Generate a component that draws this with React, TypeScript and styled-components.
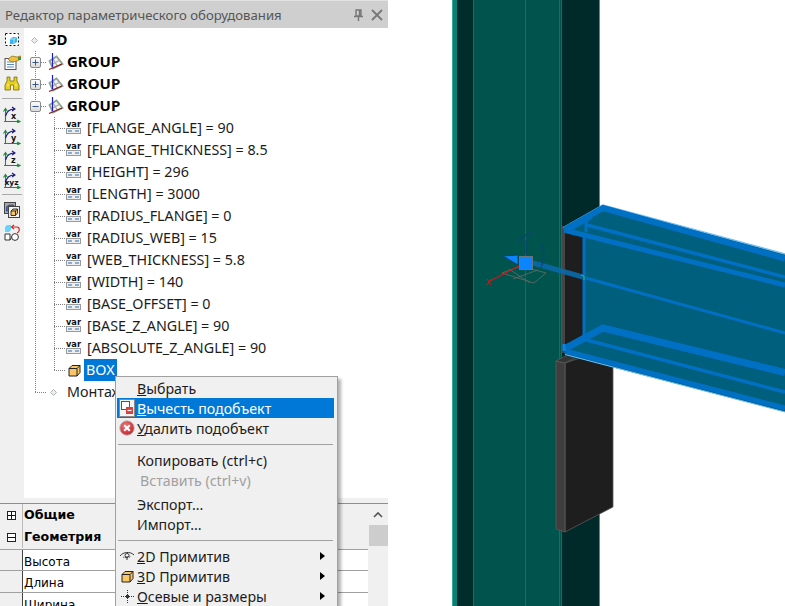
import styled, { createGlobalStyle } from "styled-components";

const UI_FONT = `"Noto Sans", "Open Sans", sans-serif`;

const GlobalStyle = createGlobalStyle`
    html, body {
        margin: 0;
        padding: 0;
        background: #fff;
        overflow: hidden;
    }
    * {
        box-sizing: border-box;
    }
`;

const Page = styled.div`
    position: relative;
    display: flex;
    width: 785px;
    height: 606px;
    overflow: hidden;
    font-family: ${UI_FONT};
    background: #fff;
`;

const Panel = styled.div`
    display: flex;
    flex-direction: column;
    width: 388px;
    height: 606px;
    flex-shrink: 0;
    background: #f0f0f0;
`;

const TitleBar = styled.div`
    display: flex;
    align-items: center;
    height: 28px;
    padding: 0 5px 0 5px;
    background: #cfcfcf;
    border-top: 1px solid #e2e2e2;
    color: #555;
    font-size: 13.15px;
`;

const TitleText = styled.span`
    flex: 1;
    white-space: nowrap;
`;

const TitleIcons = styled.div`
    display: flex;
    align-items: center;
    gap: 7px;
`;

const Body = styled.div`
    display: flex;
    height: 470px;
`;

const ToolColumn = styled.div`
    display: flex;
    flex-direction: column;
    align-items: center;
    width: 24px;
    padding-top: 1px;
    background: #f0f0f0;
`;

const Tool = styled.div`
    display: flex;
    align-items: center;
    justify-content: center;
    width: 24px;
    height: 22px;
`;

const ToolSeparator = styled.div`
    width: 20px;
    height: 1px;
    margin: 3px 0 4px;
    background: #aaa;
`;

const Tree = styled.div`
    flex: 1;
    padding-top: 1px;
    background: #fff;
`;

const Row = styled.div`
    display: flex;
    align-items: center;
    height: 22px;
    font-size: 14.3px;
    color: #1c1c1c;
    white-space: nowrap;
`;

/* one indent column of the tree, draws its dotted guides as backgrounds */
const Branch = styled.div<{ $w: number; $x?: number; $v?: "full" | "top"; $h?: number }>`
    flex-shrink: 0;
    display: flex;
    align-items: center;
    justify-content: center;
    width: ${(p) => p.$w}px;
    height: 22px;
    background-image: ${(p) =>
            p.$v ? "repeating-linear-gradient(#808080 0 1px, transparent 1px 2px)" : "none"},
        repeating-linear-gradient(90deg, #808080 0 1px, transparent 1px 2px);
    background-size: 1px ${(p) => (p.$v === "top" ? "12px" : "22px")},
        ${(p) => p.$h ?? 0}px 1px;
    background-position: ${(p) => p.$x ?? 0}px 0, ${(p) => p.$x ?? 0}px 11px;
    background-repeat: no-repeat;
`;

const Label = styled.span<{ $bold?: boolean; $selected?: boolean; $gap?: number }>`
    margin-left: ${(p) => p.$gap ?? 0}px;
    padding: ${(p) => (p.$selected ? "0 2px" : "0")};
    line-height: ${(p) => (p.$bold ? "20px" : "22px")};
    margin-bottom: ${(p) => (p.$bold ? "2px" : "0")};
    font-size: ${(p) => (p.$bold ? "15px" : "inherit")};
    font-weight: ${(p) => (p.$bold ? 700 : 400)};
    background: ${(p) => (p.$selected ? "#0078d7" : "transparent")};
    color: ${(p) => (p.$selected ? "#fff" : p.$bold ? "#000" : "#1c1c1c")};
`;

const VarSlot = styled.div`
    display: flex;
    margin-left: 1px;
`;

const Props = styled.div`
    display: flex;
    flex: 1;
    margin-top: 5px;
    background: #f0f0f0;
    border-top: 1px solid #8e8e8e;
    overflow: hidden;
`;

const PropTable = styled.div`
    width: 368px;
    font-family: "DejaVu Sans", sans-serif;
    font-size: 12px;
    color: #000;
`;

const Categories = styled.div`
    padding-bottom: 1px;
`;

const Category = styled.div`
    display: flex;
    align-items: center;
    height: 22px;
    font-size: 12.6px;
    font-weight: 700;
`;

const PropRow = styled.div`
    display: flex;
    height: 22px;
    background: #fff;
    border-top: 1px solid #a0a0a0;
    &:nth-child(2) {
        height: 21px;
    }
`;

const Gutter = styled.div`
    display: flex;
    align-items: center;
    justify-content: center;
    width: 22px;
    height: 100%;
    flex-shrink: 0;
    background: #f0f0f0;
`;

const PropName = styled.div<{ $dark?: boolean }>`
    flex: 1;
    padding-left: 1px;
    line-height: ${(p) => (p.$dark ? "24px" : "22px")};
    border-left: 1px solid ${(p) => (p.$dark ? "#444" : "#bbb")};
`;

const PropBox = styled.div`
    display: flex;
    align-items: center;
    justify-content: center;
    width: 9px;
    height: 9px;
    border: 1px solid #222;
    background: #fff;
`;

const ScrollBar = styled.div`
    display: flex;
    flex-direction: column;
    align-items: center;
    width: 20px;
`;

const ScrollArrow = styled.div`
    display: flex;
    align-items: center;
    justify-content: center;
    width: 20px;
    height: 21px;
`;

const ScrollThumb = styled.div`
    width: 19px;
    height: 21px;
    background: #cdcdcd;
`;

const Viewport = styled.svg`
    display: block;
    flex: 1;
    height: 606px;
`;

const Menu = styled.div`
    position: absolute;
    left: 115px;
    top: 376px;
    width: 223px;
    padding: 1px 3px 4px 1px;
    background: #f0f0f0;
    border: 1px solid #a0a0a0;
    box-shadow: 3px 3px 3px rgba(0, 0, 0, 0.3);
    font-size: 14.2px;
    color: #1c1c1c;
`;

const MenuItem = styled.div<{ $active?: boolean; $disabled?: boolean; $gapTop?: boolean; $indent?: number }>`
    display: flex;
    align-items: center;
    height: 20px;
    margin-top: ${(p) => (p.$gapTop ? "4px" : "0")};
    padding-left: ${(p) => p.$indent ?? 0}px;
    white-space: nowrap;
    background: ${(p) => (p.$active ? "#0078d7" : "transparent")};
    color: ${(p) => (p.$disabled ? "#a0a0a0" : p.$active ? "#fff" : "#1c1c1c")};
`;

const MenuIcon = styled.div`
    display: flex;
    align-items: center;
    justify-content: center;
    width: 20px;
    flex-shrink: 0;
`;

const MenuText = styled.span`
    flex: 1;
`;

const SubArrow = styled.div`
    width: 0;
    height: 0;
    margin-right: 9px;
    border-left: 5px solid #000;
    border-top: 4px solid transparent;
    border-bottom: 4px solid transparent;
`;

const MenuSeparator = styled.div`
    height: 1px;
    margin: 6px 0 5px 1px;
    width: 215px;
    background: #a0a0a0;
`;

/* ---------- icons ---------- */

const PinIcon = () => (
    <svg width="11" height="12" viewBox="0 0 11 12">
        <path d="M3 1h5v6H3zM1 7.5h9M5.5 8v4M6.5 1v6" fill="none" stroke="#777" strokeWidth="1.4" />
    </svg>
);

const CloseIcon = () => (
    <svg width="12" height="12" viewBox="0 0 12 12">
        <path d="M1 1l10 10M11 1L1 11" stroke="#777" strokeWidth="1.8" />
    </svg>
);

const Expander = ({ open }: { open?: boolean }) => (
    <svg width="11" height="11" viewBox="0 0 11 11">
        <defs>
            <linearGradient id="exp" x1="0" y1="0" x2="0" y2="1">
                <stop offset="0" stopColor="#fff" />
                <stop offset="1" stopColor="#d8d8d8" />
            </linearGradient>
        </defs>
        <rect x="0.5" y="0.5" width="10" height="10" rx="1.5" fill="url(#exp)" stroke="#8a8a8a" />
        <path d={open ? "M2.5 5.5h6" : "M2.5 5.5h6M5.5 2.5v6"} stroke="#35598a" strokeWidth="1" />
    </svg>
);

const Diamond = () => (
    <svg width="7" height="7" viewBox="0 0 7 7">
        <path d="M3.5 0.5L6.5 3.5L3.5 6.5L0.5 3.5Z" fill="#eee" stroke="#aeb4b8" />
    </svg>
);

const GroupIcon = () => (
    <svg width="18" height="18" viewBox="0 0 18 18">
        <path d="M2.5 8L9.5 3.5L15.5 11L6 15.5Z" fill="#f4f4f4" stroke="#8ea48e" strokeWidth="1.8" />
        <path d="M6 5.7L10.5 13.5M4.2 11.7L12.5 7.2" stroke="#a6a6a6" strokeWidth="1.2" />
        <path d="M2 16.5L15 11" stroke="#8a1c1c" strokeWidth="1.3" />
        <path d="M5.5 0v14" stroke="#1a1ad0" strokeWidth="1.2" />
    </svg>
);

const VarIcon = () => (
    <svg width="16" height="16" viewBox="0 0 16 16">
        <text
            x="0"
            y="7"
            fontFamily="DejaVu Sans, sans-serif"
            fontSize="8"
            fontWeight="700"
            fill="#111"
            textLength="15"
            lengthAdjust="spacingAndGlyphs"
        >
            var
        </text>
        <rect x="0.5" y="8.5" width="14" height="5" fill="#eee" stroke="#9a9a9a" />
        <path d="M2 11h4M9 11h4" stroke="#1f6fc0" strokeWidth="1" />
    </svg>
);

const CubeIcon = () => (
    <svg width="13" height="13" viewBox="0 0 13 13">
        <path d="M1 4.5L4 1.5H12V8.5L9 12H1Z" fill="#fbc766" stroke="#222" strokeWidth="1" />
        <path d="M1 4.5H9V12M9 4.5L12 1.5" fill="none" stroke="#222" strokeWidth="1" />
    </svg>
);

const SubtractIcon = () => (
    <svg width="16" height="18" viewBox="0 0 16 18">
        <rect x="0.5" y="0.5" width="15" height="17" fill="#f4f4f4" stroke="#888" />
        <rect x="2.5" y="2.5" width="8" height="8" fill="#fff" stroke="#b03030" />
        <rect x="7" y="8" width="7" height="7" fill="#d84040" />
        <path d="M8.5 11.5h4" stroke="#fff" strokeWidth="1.2" />
    </svg>
);

const DeleteIcon = () => (
    <svg width="16" height="16" viewBox="0 0 16 16">
        <defs>
            <radialGradient id="del" cx="0.4" cy="0.35" r="0.75">
                <stop offset="0" stopColor="#f0787a" />
                <stop offset="1" stopColor="#b81c24" />
            </radialGradient>
        </defs>
        <circle cx="8" cy="8" r="7.3" fill="url(#del)" stroke="#c8c0c0" />
        <path d="M5.2 5.2l5.6 5.6M10.8 5.2l-5.6 5.6" stroke="#fff" strokeWidth="2" />
    </svg>
);

const EyeIcon = () => (
    <svg width="16" height="10" viewBox="0 0 16 10">
        <path d="M1 5C4 1 11 0 15 4" fill="none" stroke="#333" strokeWidth="1" />
        <path d="M4 6c2 1 6 1 8-1" fill="none" stroke="#333" strokeWidth="1" strokeDasharray="1 1" />
        <circle cx="8" cy="4.5" r="2" fill="#fff" stroke="#333" />
        <path d="M8 5v4" stroke="#333" strokeWidth="1" />
    </svg>
);

const AxisIcon = () => (
    <svg width="15" height="15" viewBox="0 0 15 15">
        <path d="M7.5 1v13M1 7.5h13" stroke="#333" strokeWidth="1" strokeDasharray="1 1" />
        <rect x="6" y="6" width="3" height="3" fill="#333" />
    </svg>
);

const SelectTool = () => (
    <svg width="16" height="16" viewBox="0 0 16 16">
        <rect x="1.5" y="1.5" width="13" height="12" fill="#fff" stroke="#111" strokeDasharray="2 2" />
        <path d="M6 7l3-2h4v5l-3 2H6z" fill="#38b4ee" />
        <path d="M6 7h4v5M10 7l3-2" fill="none" stroke="#a8e2fa" />
    </svg>
);

const ParamsTool = () => (
    <svg width="17" height="17" viewBox="0 0 17 17">
        <rect x="1" y="4.5" width="11" height="11" fill="#fff" stroke="#555" />
        <path d="M3 8h7M3 10.5h7M3 13h7" stroke="#5a8ac0" strokeWidth="1" />
        <path d="M4 5l4-3 5 1 4-1v3l-4 2-4 1-3-1z" fill="#f0c040" stroke="#8a6a20" strokeWidth="0.7" />
        <path d="M14 3h3v3h-3z" fill="#3a9a3a" />
    </svg>
);

const BinocularsTool = () => (
    <svg width="16" height="16" viewBox="0 0 16 16">
        <path d="M3 1h3v4h4V1h3v4l2 4v5H9.5V9h-3v5H1V9l2-4z" fill="#e6d020" stroke="#7a6c08" strokeWidth="0.8" />
        <path d="M3 9h2M11 9h2" stroke="#fff9a0" strokeWidth="1" />
    </svg>
);

const UcsTool = ({ label }: { label: string }) => (
    <svg width="20" height="18" viewBox="0 0 20 18">
        <path d="M3.5 17V4M1.5 6.5l2-3 2 3M2 16.5h15M15 15l3 1.5-3 1.5" fill="none" stroke="#1f8a3a" strokeWidth="1.1" />
        <path d="M3.5 11C5 6 8 4 12 4M10 2l3 2-3 2" fill="none" stroke="#1a1a80" strokeWidth="1.1" />
        <text
            x={label.length > 1 ? 2.5 : 9}
            y="14"
            fontFamily="DejaVu Sans, sans-serif"
            fontSize={label.length > 1 ? 7.5 : 8}
            fontWeight="700"
            fill="#111"
        >
            {label}
        </text>
    </svg>
);

const BoxesTool = () => (
    <svg width="16" height="16" viewBox="0 0 16 16">
        <rect x="0.5" y="0.5" width="11" height="11" fill="#a8a8a8" stroke="#444" />
        <path d="M2.5 5l2-2h5v4l-2 2h-5z" fill="#3a70c8" stroke="#1a4080" strokeWidth="0.7" />
        <rect x="4.5" y="4.5" width="11" height="11" fill="#f2f2f2" stroke="#444" />
        <path d="M7 9l2-2h4.5v4l-2 2.5H7z" fill="#fbc766" stroke="#222" strokeWidth="0.9" />
        <path d="M7 9h4.5v4.5M11.5 9l2-2" fill="none" stroke="#222" strokeWidth="0.9" />
    </svg>
);

const ConvertTool = () => (
    <svg width="17" height="17" viewBox="0 0 17 17">
        <path d="M1 3l2-2h4v5L5 8H1z" fill="#66d4f8" />
        <path d="M1 10h5v6H1z" fill="#fff" stroke="#333" />
        <path d="M6 16l3-5" stroke="#333" />
        <circle cx="11" cy="13" r="3.4" fill="#fff" stroke="#333" />
        <path d="M8 3h5c3 0 3 5 0 6" fill="none" stroke="#d01818" strokeWidth="1.1" />
        <path d="M10 0.8L7.5 3l2.5 2.2" fill="none" stroke="#d01818" strokeWidth="1.1" />
    </svg>
);

/* ---------- 3D scene ---------- */

const Scene = () => (
    <Viewport viewBox="388 0 397 606">
        <rect x="388" y="0" width="397" height="606" fill="#fff" />

        {/* column */}
        <rect x="452" y="0" width="148" height="606" fill="#00544e" />
        <rect x="452" y="0" width="5" height="606" fill="#0a7d74" />
        <rect x="452" y="0" width="1" height="606" fill="#38a89e" />
        <rect x="457" y="0" width="16" height="606" fill="#002d2c" />
        <rect x="473" y="0" width="1" height="606" fill="#0f7068" />
        <rect x="525" y="0" width="1" height="606" fill="#0f7068" />
        <rect x="559" y="0" width="1" height="606" fill="#0f7068" />
        <rect x="561" y="0" width="1" height="606" fill="#0f7068" />
        <rect x="562" y="0" width="37" height="606" fill="#002a2a" />
        <rect x="599" y="0" width="1" height="606" fill="#2f9d94" />

        {/* upper plate behind the beam */}
        <path d="M562 226L583 232V345L562 353Z" fill="#1e1e1e" />
        <path d="M562 226H565V353H562Z" fill="#454545" />

        {/* beam web */}
        <path d="M583 232L785 284V376L583 337Z" fill="#005f7c" />

        {/* lower plate */}
        <path d="M565 363L613 347V507L565 532Z" fill="#1e1e1e" stroke="#5a5a5a" strokeWidth="0.8" />
        <path d="M556 361L565 363V532L556 529Z" fill="#3e3e3e" stroke="#5a5a5a" strokeWidth="0.8" />
        <path d="M556 361L575 351L583 354L565 363Z" fill="#333" stroke="#5a5a5a" strokeWidth="0.8" />

        {/* top flange */}
        <path d="M563 228L603 205L785 254V288L565 233Z" fill="#005f7c" />
        <path d="M563 228L603 205L785 254" fill="none" stroke="#6fbdf5" strokeWidth="1.5" />
        <path d="M564 230L603 208L785 258.5" fill="none" stroke="#0070c4" strokeWidth="6" />
        <path d="M587 225L785 277" stroke="#0070c4" strokeWidth="3.5" />
        <path d="M564 230L785 285" stroke="#0070c4" strokeWidth="5" />
        <path d="M586 221V232" stroke="#0070c4" strokeWidth="3" />
        <path d="M569 231L592 218" stroke="#0070c4" strokeWidth="2" />

        {/* web edges */}
        <path d="M584 233V338" stroke="#0070c4" strokeWidth="3" />
        <path d="M533 263L583 277" stroke="#0b6aa8" strokeWidth="5" opacity="0.9" />
        <path d="M586 278L785 333" stroke="#0070c4" strokeWidth="3" />
        <path d="M581 275l3 1v4" fill="none" stroke="#22c060" strokeWidth="1" />

        {/* bottom flange */}
        <path d="M563 347L603 326L785 368V412L565 355Z" fill="#005f7c" />
        <path d="M564 349L603 328L785 372.5" fill="none" stroke="#0070c4" strokeWidth="7" />
        <path d="M583 339L785 392" stroke="#0070c4" strokeWidth="3.5" />
        <path d="M565 351L785 408" stroke="#0070c4" strokeWidth="5" />
        <path d="M565 354.5L785 412" stroke="#6fbdf5" strokeWidth="1" />
        <path d="M564 344V351" stroke="#0a84e0" strokeWidth="3" />

        {/* gizmo */}
        <path d="M502 273L521 266L546 273L534 283Z M513 279L538 270 M509 269L530 283" fill="none" stroke="#6a6a62" strokeWidth="0.8" />
        <path d="M519 266L490 281" stroke="#e01010" strokeWidth="1.2" />
        <path d="M487 279l4 6M491 279l-4 6" stroke="#e01010" strokeWidth="1" />
        <path d="M526 255V240" stroke="#10407a" strokeWidth="1.2" />
        <path d="M519 243C521 238 525 234 533 233" fill="none" stroke="#10407a" strokeWidth="1.6" strokeDasharray="3 1" />
        <path d="M541 243C545 250 544 260 541 268" fill="none" stroke="#10407a" strokeWidth="1.6" strokeDasharray="3 1" />
        <path d="M503 256L518 255V265Z" fill="#0a84ff" stroke="#0a3a60" strokeWidth="0.8" />
        <rect x="519.5" y="256.5" width="13" height="13" fill="#0a84ff" stroke="#66767e" />
    </Viewport>
);

/* ---------- data ---------- */

const vars = [
    "[FLANGE_ANGLE] = 90",
    "[FLANGE_THICKNESS] = 8.5",
    "[HEIGHT] = 296",
    "[LENGTH] = 3000",
    "[RADIUS_FLANGE] = 0",
    "[RADIUS_WEB] = 15",
    "[WEB_THICKNESS] = 5.8",
    "[WIDTH] = 140",
    "[BASE_OFFSET] = 0",
    "[BASE_Z_ANGLE] = 90",
    "[ABSOLUTE_Z_ANGLE] = 90",
];

const Plus = () => (
    <svg width="7" height="7" viewBox="0 0 7 7">
        <path d="M0 3.5h7M3.5 0v7" stroke="#111" />
    </svg>
);

const Minus = () => (
    <svg width="7" height="7" viewBox="0 0 7 7">
        <path d="M0 3.5h7" stroke="#111" />
    </svg>
);

function App() {
    return (
        <Page>
            <GlobalStyle />
            <Panel>
                <TitleBar>
                    <TitleText>Редактор параметрического оборудования</TitleText>
                    <TitleIcons>
                        <PinIcon />
                        <CloseIcon />
                    </TitleIcons>
                </TitleBar>
                <Body>
                    <ToolColumn>
                        <Tool><SelectTool /></Tool>
                        <Tool><ParamsTool /></Tool>
                        <Tool><BinocularsTool /></Tool>
                        <ToolSeparator />
                        <Tool><UcsTool label="x" /></Tool>
                        <Tool><UcsTool label="y" /></Tool>
                        <Tool><UcsTool label="z" /></Tool>
                        <Tool><UcsTool label="xyz" /></Tool>
                        <ToolSeparator />
                        <Tool><BoxesTool /></Tool>
                        <Tool><ConvertTool /></Tool>
                    </ToolColumn>
                    <Tree>
                        <Row>
                            <Branch $w={20}><Diamond /></Branch>
                            <Label $bold $gap={4}>3D</Label>
                        </Row>
                        {[false, false, true].map((open, i) => (
                            <Row key={i}>
                                <Branch $w={22} $x={11} $h={11} $v="full"><Expander open={open} /></Branch>
                                <Branch $w={19}><GroupIcon /></Branch>
                                <Label $bold $gap={2}>GROUP</Label>
                            </Row>
                        ))}
                        {vars.map((text) => (
                            <Row key={text}>
                                <Branch $w={22} $x={11} $v="full" />
                                <Branch $w={19} $x={8} $v="full" $h={11} />
                                <VarSlot><VarIcon /></VarSlot>
                                <Label $gap={5}>{text}</Label>
                            </Row>
                        ))}
                        <Row>
                            <Branch $w={22} $x={11} $v="full" />
                            <Branch $w={19} $x={8} $v="top" $h={11} />
                            <Branch $w={19}><CubeIcon /></Branch>
                            <Label $selected>BOX</Label>
                        </Row>
                        <Row>
                            <Branch $w={22} $x={11} $v="top" $h={11} />
                            <Branch $w={14}><Diamond /></Branch>
                            <Label $gap={7}>Монтаж</Label>
                        </Row>
                    </Tree>
                </Body>
                <Props>
                    <PropTable>
                        <Categories>
                            <Category>
                                <Gutter><PropBox><Plus /></PropBox></Gutter>
                                <PropName>Общие</PropName>
                            </Category>
                            <Category>
                                <Gutter><PropBox><Minus /></PropBox></Gutter>
                                <PropName>Геометрия</PropName>
                            </Category>
                        </Categories>
                        {["Высота", "Длина", "Ширина"].map((name) => (
                            <PropRow key={name}>
                                <Gutter />
                                <PropName $dark>{name}</PropName>
                            </PropRow>
                        ))}
                    </PropTable>
                    <ScrollBar>
                        <ScrollArrow>
                            <svg width="10" height="7" viewBox="0 0 10 7">
                                <path d="M1 6l4-4 4 4" fill="none" stroke="#555" strokeWidth="1.6" />
                            </svg>
                        </ScrollArrow>
                        <ScrollThumb />
                    </ScrollBar>
                </Props>
            </Panel>
            <Scene />
            <Menu>
                <MenuItem>
                    <MenuIcon />
                    <MenuText><u>В</u>ыбрать</MenuText>
                </MenuItem>
                <MenuItem $active>
                    <MenuIcon><SubtractIcon /></MenuIcon>
                    <MenuText><u>В</u>ычесть подобъект</MenuText>
                </MenuItem>
                <MenuItem>
                    <MenuIcon><DeleteIcon /></MenuIcon>
                    <MenuText><u>У</u>далить подобъект</MenuText>
                </MenuItem>
                <MenuSeparator />
                <MenuItem>
                    <MenuIcon />
                    <MenuText>Копировать (ctrl+c)</MenuText>
                </MenuItem>
                <MenuItem $disabled $indent={3}>
                    <MenuIcon />
                    <MenuText>Вставить (ctrl+v)</MenuText>
                </MenuItem>
                <MenuItem $gapTop>
                    <MenuIcon />
                    <MenuText>Экспорт...</MenuText>
                </MenuItem>
                <MenuItem>
                    <MenuIcon />
                    <MenuText>Импорт...</MenuText>
                </MenuItem>
                <MenuSeparator />
                <MenuItem>
                    <MenuIcon><EyeIcon /></MenuIcon>
                    <MenuText><u>2</u>D Примитив</MenuText>
                    <SubArrow />
                </MenuItem>
                <MenuItem>
                    <MenuIcon><CubeIcon /></MenuIcon>
                    <MenuText><u>3</u>D Примитив</MenuText>
                    <SubArrow />
                </MenuItem>
                <MenuItem>
                    <MenuIcon><AxisIcon /></MenuIcon>
                    <MenuText><u>О</u>севые и размеры</MenuText>
                    <SubArrow />
                </MenuItem>
            </Menu>
        </Page>
    );
}

export default App;
